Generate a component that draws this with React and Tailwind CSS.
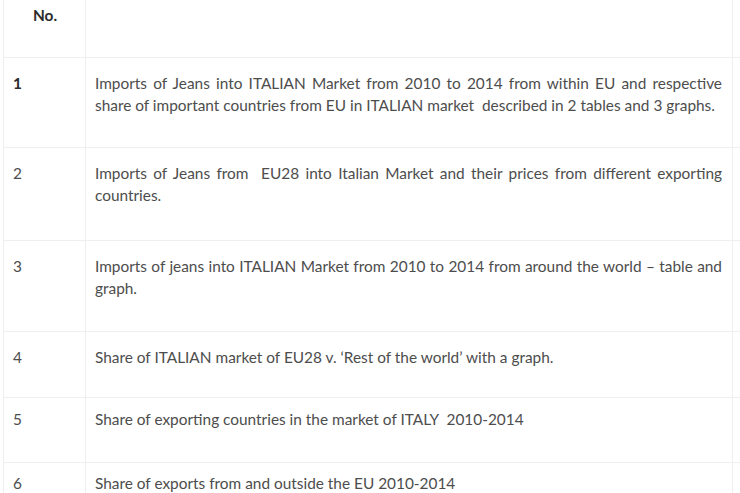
import React from "react";

const rows = [
  { no: "1", h: "h-[90px]", pt: "pt-[14px]", bold: true, text: "Imports of Jeans into ITALIAN Market from 2010 to 2014 from within EU and respective share of important countries from EU in ITALIAN market  described in 2 tables and 3 graphs." },
  { no: "2", h: "h-[93px]", pt: "pt-[14px]", text: "Imports of Jeans from  EU28 into Italian Market and their prices from different exporting countries." },
  { no: "3", h: "h-[91px]", pt: "pt-[14px]", text: "Imports of jeans into ITALIAN Market from 2010 to 2014 from around the world – table and graph." },
  { no: "4", h: "h-[66px]", pt: "pt-[14px]", text: "Share of ITALIAN market of EU28 v. ‘Rest of the world’ with a graph." },
  { no: "5", h: "h-[65px]", pt: "pt-[10px]", text: "Share of exporting countries in the market of ITALY\u00a0 2010-2014" },
  { no: "6", h: "h-[60px]", pt: "pt-[9px]", text: "Share of exports from and outside the EU 2010-2014", last: true },
];

export default function App() {
  return (
    <div className="w-[740px] h-[493px] overflow-hidden bg-white text-[#4d4d4d] text-[15.4px] leading-[22px]" style={{ fontFamily: "Lato, 'Open Sans', sans-serif" }}>
      <div className="ml-[3px] flex flex-col">
        <div className="flex h-[58px] border-b border-[#efefef]">
          <div className="w-[83px] border-x border-[#efefef] pl-[29px] pt-[4px] font-bold text-[#2b2b2b]">No.</div>
          <div className="w-[647px] border-r border-[#efefef]" />
        </div>
        {rows.map((r) => (
          <div key={r.no} className={`flex ${r.h} ${r.last ? "" : "border-b border-[#efefef]"}`}>
            <div className={`w-[83px] border-x border-[#efefef] pl-[9px] ${r.pt} ${r.bold ? "font-bold text-[#2b2b2b]" : ""}`}>{r.no}</div>
            <div className={`w-[647px] border-r border-[#efefef] pl-[9px] pr-[10px] text-justify whitespace-pre-wrap ${r.pt}`}>{r.text}</div>
          </div>
        ))}
      </div>
    </div>
  );
}
